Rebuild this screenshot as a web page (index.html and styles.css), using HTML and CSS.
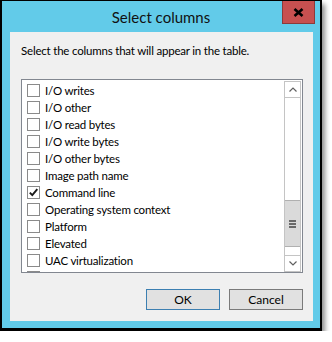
FILE: index.html
```html
<!DOCTYPE html>
<html>
<head>
<meta charset="utf-8">
<link rel="stylesheet" href="styles.css">
</head>
<body>
<div class="window">
  <div class="titlebar">
    <span class="title">Select columns</span>
    <button class="close" aria-label="Close">
      <svg width="11" height="9" viewBox="0 0 11 9"><path d="M1.5 1 L9.5 8 M9.5 1 L1.5 8" stroke="#000" stroke-width="2.6" fill="none"/></svg>
    </button>
  </div>
  <div class="client">
    <p class="message">Select the columns that will appear in the table.</p>
    <div class="listbox">
      <ul class="items">
        <li class="item"><span class="check"></span><span class="label">I/O writes</span></li>
        <li class="item"><span class="check"></span><span class="label">I/O other</span></li>
        <li class="item"><span class="check"></span><span class="label">I/O read bytes</span></li>
        <li class="item"><span class="check"></span><span class="label">I/O write bytes</span></li>
        <li class="item"><span class="check"></span><span class="label">I/O other bytes</span></li>
        <li class="item"><span class="check"></span><span class="label">Image path name</span></li>
        <li class="item"><span class="check checked"><svg width="11" height="11" viewBox="0 0 11 11"><path d="M1.8 5.6 L4.3 8.2 L9.3 2.2" stroke="#1a1a1a" stroke-width="1.9" fill="none"/></svg></span><span class="label">Command line</span></li>
        <li class="item"><span class="check"></span><span class="label">Operating system context</span></li>
        <li class="item"><span class="check"></span><span class="label">Platform</span></li>
        <li class="item"><span class="check"></span><span class="label">Elevated</span></li>
        <li class="item"><span class="check"></span><span class="label">UAC virtualization</span></li>
        <li class="item"><span class="check"></span></li>
      </ul>
      <div class="scrollbar">
        <div class="sb-btn sb-up">
          <svg width="8" height="5" viewBox="0 0 8 5"><path d="M0.5 4.5 L4 1 L7.5 4.5" stroke="#606060" stroke-width="1.2" fill="none"/></svg>
        </div>
        <div class="sb-track">
          <div class="sb-thumb"><span class="grip"></span><span class="grip"></span><span class="grip"></span></div>
        </div>
        <div class="sb-btn sb-down">
          <svg width="8" height="5" viewBox="0 0 8 5"><path d="M0.5 0.5 L4 4 L7.5 0.5" stroke="#606060" stroke-width="1.2" fill="none"/></svg>
        </div>
      </div>
    </div>
    <div class="buttons">
      <button class="btn btn-default">OK</button>
      <button class="btn">Cancel</button>
    </div>
  </div>
</div>
</body>
</html>
```
FILE: styles.css
```css
html, body {
  margin: 0;
  padding: 0;
  background: #ffffff;
}
body {
  font-family: Lato, "Noto Sans", sans-serif;
  color: #000;
}
.window {
  width: 322px;
  height: 331px;
  box-sizing: border-box;
  border: 2px solid #000;
  border-top-width: 1px;
  border-bottom-width: 3px;
  background: #62cbe9;
  display: flex;
  flex-direction: column;
  box-shadow: 3px 4px 5px rgba(0, 0, 0, 0.45);
}
.titlebar {
  height: 31px;
  flex: none;
  display: grid;
  grid-template-columns: 1fr auto 1fr;
  align-items: start;
}
.title {
  grid-column: 2;
  font-size: 15px;
  line-height: 32px;
  color: #111;
  white-space: nowrap;
}
.close {
  grid-column: 3;
  justify-self: end;
  margin: 0 5px 0 0;
  width: 33px;
  height: 23px;
  box-sizing: border-box;
  padding: 0;
  border: 1px solid #8c3a3a;
  border-top: none;
  background: #c75050;
  display: flex;
  align-items: center;
  justify-content: center;
}
.close svg {
  display: block;
  margin-top: 1px;
}
.client {
  flex: 1;
  margin: 0 7px 7px 8px;
  background: #f0f0f0;
  display: flex;
  flex-direction: column;
  font-size: 11.5px;
  letter-spacing: -0.2px;
}
.message {
  margin: 0;
  padding: 11px 0 0 11px;
  line-height: 15px;
  white-space: nowrap;
}
.listbox {
  margin: 21px 10px 0 11px;
  height: 194px;
  box-sizing: border-box;
  border: 1px solid #828790;
  background: #fff;
  padding: 1px 1px 0 0;
  display: flex;
}
.items {
  flex: 1;
  list-style: none;
  margin: 0;
  padding: 1px 0 0 5px;
  overflow: hidden;
}
.item {
  height: 17px;
  display: flex;
  align-items: center;
  gap: 5px;
}
.check {
  width: 13px;
  height: 13px;
  box-sizing: border-box;
  border: 1px solid #8a8a8a;
  background: #fff;
  flex: none;
  display: flex;
  align-items: center;
  justify-content: center;
}
.label {
  line-height: 17px;
  white-space: nowrap;
}
.scrollbar {
  width: 17px;
  flex: none;
  box-sizing: border-box;
  border: 1px solid #c4c4c4;
  display: flex;
  flex-direction: column;
  background: #fff;
}
.sb-btn {
  height: 16px;
  flex: none;
  box-sizing: border-box;
  display: flex;
  align-items: center;
  justify-content: center;
}
.sb-up {
  border-bottom: 1px solid #c4c4c4;
}
.sb-down {
  border-top: 1px solid #c4c4c4;
  height: 16px;
}
.sb-track {
  flex: 1;
  display: flex;
  flex-direction: column;
}
.sb-thumb {
  margin-top: 102px;
  height: 47px;
  box-sizing: border-box;
  border-top: 1px solid #b0b0b0;
  border-bottom: 1px solid #b0b0b0;
  background: #dadada;
  display: flex;
  flex-direction: column;
  align-items: center;
  justify-content: center;
  gap: 1px;
}
.grip {
  width: 7px;
  height: 2px;
  background: #6a6a6a;
}
.buttons {
  margin-top: 16px;
  padding-right: 10px;
  display: flex;
  justify-content: flex-end;
  gap: 9px;
}
.btn {
  width: 74px;
  height: 21px;
  box-sizing: border-box;
  border: 1px solid #7a7a7a;
  background: #e1e1e1;
  font-family: Lato, "Noto Sans", sans-serif;
  font-size: 12px;
  color: #000;
  padding: 0;
  line-height: 18px;
}
.btn-default {
  border-color: #3c7fb1;
}
```
